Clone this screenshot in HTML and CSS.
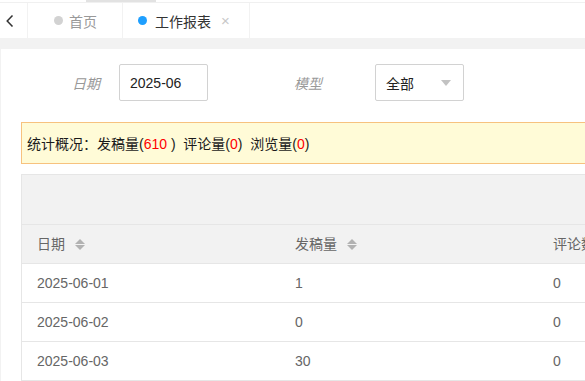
FILE: index.html
```html
<!DOCTYPE html>
<html lang="zh-CN">
  <head>
    <meta charset="UTF-8" />
    <meta name="viewport" content="width=device-width, initial-scale=1.0" />
    <title>工作报表</title>
    <link rel="stylesheet" href="styles.css">
  </head>
  <body>
    <div class="top-strip"><span class="top-strip-bar"></span></div>

    <div class="tabs">
      <div class="tab-back">
        <svg width="8" height="12" viewBox="0 0 8 12">
          <polyline points="6.5,0.5 1.2,6 6.5,11.5" fill="none" stroke="#333" stroke-width="1.5" />
        </svg>
      </div>
      <div class="tab tab-home">
        <span class="dot"></span>
        <span class="tab-title">首页</span>
      </div>
      <div class="tab tab-active">
        <span class="dot"></span>
        <span class="tab-title">工作报表</span>
        <span class="tab-close">&times;</span>
      </div>
    </div>

    <div class="main">
      <div class="panel">
        <div class="form-row">
          <label class="form-label label-date">日期</label>
          <div class="input">2025-06</div>
          <label class="form-label label-model">模型</label>
          <div class="input select">
            <span>全部</span>
            <span class="caret"></span>
          </div>
        </div>

        <div class="summary">统计概况：发稿量(<span class="num">610</span> )&nbsp; 评论量(<span class="num">0</span>)&nbsp; 浏览量(<span class="num">0</span>)</div>

        <div class="table-wrap">
          <div class="table-toolbar"></div>
          <table class="data-table">
            <thead>
              <tr>
                <th>日期 <span class="sort"></span></th>
                <th>发稿量 <span class="sort"></span></th>
                <th>评论数 <span class="sort"></span></th>
                <th>浏览量 <span class="sort"></span></th>
                <th></th>
              </tr>
            </thead>
            <tbody>
              <tr><td>2025-06-01</td><td>1</td><td>0</td><td>0</td><td></td></tr>
              <tr><td>2025-06-02</td><td>0</td><td>0</td><td>0</td><td></td></tr>
              <tr><td>2025-06-03</td><td>30</td><td>0</td><td>0</td><td></td></tr>
              <tr><td>2025-06-04</td><td>12</td><td>0</td><td>0</td><td></td></tr>
            </tbody>
          </table>
        </div>
      </div>
    </div>
  </body>
</html>
```

FILE: styles.css
```css
* {
  margin: 0;
  padding: 0;
  box-sizing: border-box;
}

html,
body {
  height: 100%;
  overflow: hidden;
}

body {
  background: #fff;
  font-family: "Liberation Sans", "Noto Sans CJK SC", sans-serif;
  font-size: 14px;
  color: #333;
}

.top-strip {
  height: 3px;
  border-bottom: 1px solid #f0f0f0;
}

.top-strip-bar {
  display: block;
  margin-left: 86px;
  width: 70px;
  height: 2px;
  background: #e2e2e2;
}

.tabs {
  display: flex;
  height: 35px;
  background: #fff;
}

.tab-back {
  width: 28px;
  display: flex;
  align-items: center;
  justify-content: center;
  padding-right: 8px;
  border-right: 1px solid #f2f2f2;
}

.tab {
  display: flex;
  align-items: center;
  border-right: 1px solid #f2f2f2;
}

.tab-home {
  width: 95px;
  padding-left: 26px;
  color: #999;
}

.tab-active {
  width: 127px;
  padding-left: 15px;
  color: #333;
}

.dot {
  width: 9px;
  height: 9px;
  border-radius: 50%;
  background: #d2d2d2;
  margin-right: 6px;
}

.tab-active .dot {
  background: #1e9fff;
  margin-right: 8px;
}

.tab-close {
  margin-left: 10px;
  color: #c8c8c8;
  font-size: 15px;
}

.main {
  background: #f2f2f2;
  padding: 11px 0 0 1px;
  height: 100%;
}

.panel {
  background: #fff;
  padding: 15px 20px;
  height: 100%;
  overflow: hidden;
}

.form-row {
  display: flex;
  align-items: center;
  height: 37px;
}

.form-label {
  color: #999;
  font-style: italic;
  text-align: right;
}

.label-date {
  width: 79px;
  margin-right: 19px;
}

.label-model {
  width: 29px;
  margin-left: 85px;
  margin-right: 53px;
}

.input {
  width: 89px;
  height: 37px;
  border: 1px solid #d2d2d2;
  border-radius: 2px;
  padding-left: 10px;
  display: flex;
  align-items: center;
  color: #222;
}

.select {
  justify-content: space-between;
  padding-right: 12px;
}

.caret {
  width: 0;
  height: 0;
  border-left: 5.5px solid transparent;
  border-right: 5.5px solid transparent;
  border-top: 6px solid #c2c2c2;
}

.summary {
  margin-top: 21px;
  height: 42px;
  width: 1300px;
  border: 1px solid #f7c27e;
  background: #fffbd7;
  padding: 11px 5px 0;
  line-height: 20px;
  color: #1a1a1a;
  white-space: nowrap;
}

.summary .num {
  color: #f00;
}

.table-wrap {
  margin-top: 10px;
  width: 1300px;
  border: 1px solid #e6e6e6;
}

.table-toolbar {
  height: 50px;
  background: #f2f2f2;
  border-bottom: 1px solid #e6e6e6;
}

.data-table {
  width: 1290px;
  table-layout: fixed;
  border-collapse: separate;
  border-spacing: 0;
}

.data-table th,
.data-table td {
  width: 258px;
  padding: 9px 15px;
  line-height: 20px;
  text-align: left;
  border-bottom: 1px solid #e6e6e6;
  color: #666;
  font-weight: normal;
  white-space: nowrap;
}

.data-table th {
  background: #f2f2f2;
}

.sort {
  display: inline-block;
  position: relative;
  width: 10px;
  height: 11px;
  margin-left: 6px;
  vertical-align: -1px;
}

.sort::before,
.sort::after {
  content: "";
  position: absolute;
  left: 0;
  border-left: 5px solid transparent;
  border-right: 5px solid transparent;
}

.sort::before {
  top: 0;
  border-bottom: 5px solid #b2b2b2;
}

.sort::after {
  bottom: 0;
  border-top: 5px solid #b2b2b2;
}
```
